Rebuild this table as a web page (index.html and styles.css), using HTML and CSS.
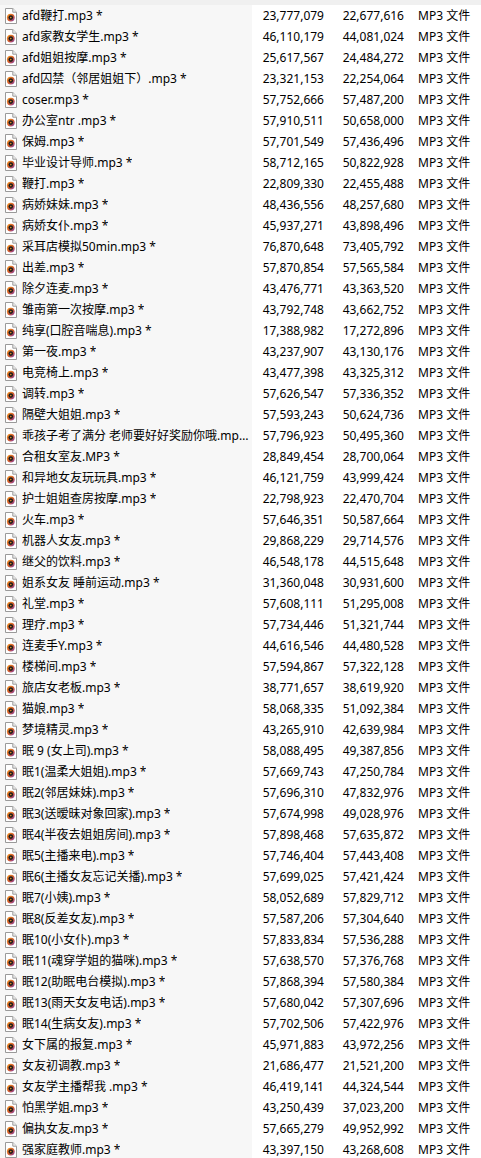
FILE: index.html
```html
<!DOCTYPE html>
<html lang="zh-CN">
<head>
<meta charset="utf-8">
<title>文件列表</title>
<link rel="stylesheet" href="styles.css">
</head>
<body>
<svg class="defs" width="0" height="0" aria-hidden="true">
  <defs>
    <linearGradient id="ring" x1="0" y1="0" x2="1" y2="1">
      <stop offset="0" stop-color="#f39a1e"/>
      <stop offset="0.55" stop-color="#d2582e"/>
      <stop offset="1" stop-color="#7b3bb8"/>
    </linearGradient>
    <symbol id="mp3" viewBox="0 0 12 16">
      <path d="M0.5 0.5 H7.8 L11.5 4.2 V15.5 H0.5 Z" fill="#fff" stroke="#9a9a9a"/>
      <path d="M7.8 0.5 V4.2 H11.5" fill="#f0f0f0" stroke="#9a9a9a"/>
      <circle cx="5.8" cy="9.6" r="3.9" fill="url(#ring)"/>
      <circle cx="5.8" cy="9.6" r="2.3" fill="#1c1c1c"/>
      <circle cx="5.8" cy="9.6" r="0.8" fill="#e8902c"/>
    </symbol>
  </defs>
</svg>
<div class="list">
  <div class="topbar"></div>
  <div class="row"><div class="name"><svg class="ico"><use href="#mp3"/></svg><span class="fn">afd鞭打.mp3 *</span></div><div class="num">23,777,079</div><div class="num">22,677,616</div><div class="type">MP3 文件</div></div>
  <div class="row"><div class="name"><svg class="ico"><use href="#mp3"/></svg><span class="fn">afd家教女学生.mp3 *</span></div><div class="num">46,110,179</div><div class="num">44,081,024</div><div class="type">MP3 文件</div></div>
  <div class="row"><div class="name"><svg class="ico"><use href="#mp3"/></svg><span class="fn">afd姐姐按摩.mp3 *</span></div><div class="num">25,617,567</div><div class="num">24,484,272</div><div class="type">MP3 文件</div></div>
  <div class="row"><div class="name"><svg class="ico"><use href="#mp3"/></svg><span class="fn">afd囚禁（邻居姐姐下）.mp3 *</span></div><div class="num">23,321,153</div><div class="num">22,254,064</div><div class="type">MP3 文件</div></div>
  <div class="row"><div class="name"><svg class="ico"><use href="#mp3"/></svg><span class="fn">coser.mp3 *</span></div><div class="num">57,752,666</div><div class="num">57,487,200</div><div class="type">MP3 文件</div></div>
  <div class="row"><div class="name"><svg class="ico"><use href="#mp3"/></svg><span class="fn">办公室ntr .mp3 *</span></div><div class="num">57,910,511</div><div class="num">50,658,000</div><div class="type">MP3 文件</div></div>
  <div class="row"><div class="name"><svg class="ico"><use href="#mp3"/></svg><span class="fn">保姆.mp3 *</span></div><div class="num">57,701,549</div><div class="num">57,436,496</div><div class="type">MP3 文件</div></div>
  <div class="row"><div class="name"><svg class="ico"><use href="#mp3"/></svg><span class="fn">毕业设计导师.mp3 *</span></div><div class="num">58,712,165</div><div class="num">50,822,928</div><div class="type">MP3 文件</div></div>
  <div class="row"><div class="name"><svg class="ico"><use href="#mp3"/></svg><span class="fn">鞭打.mp3 *</span></div><div class="num">22,809,330</div><div class="num">22,455,488</div><div class="type">MP3 文件</div></div>
  <div class="row"><div class="name"><svg class="ico"><use href="#mp3"/></svg><span class="fn">病娇妹妹.mp3 *</span></div><div class="num">48,436,556</div><div class="num">48,257,680</div><div class="type">MP3 文件</div></div>
  <div class="row"><div class="name"><svg class="ico"><use href="#mp3"/></svg><span class="fn">病娇女仆.mp3 *</span></div><div class="num">45,937,271</div><div class="num">43,898,496</div><div class="type">MP3 文件</div></div>
  <div class="row"><div class="name"><svg class="ico"><use href="#mp3"/></svg><span class="fn">采耳店模拟50min.mp3 *</span></div><div class="num">76,870,648</div><div class="num">73,405,792</div><div class="type">MP3 文件</div></div>
  <div class="row"><div class="name"><svg class="ico"><use href="#mp3"/></svg><span class="fn">出差.mp3 *</span></div><div class="num">57,870,854</div><div class="num">57,565,584</div><div class="type">MP3 文件</div></div>
  <div class="row"><div class="name"><svg class="ico"><use href="#mp3"/></svg><span class="fn">除夕连麦.mp3 *</span></div><div class="num">43,476,771</div><div class="num">43,363,520</div><div class="type">MP3 文件</div></div>
  <div class="row"><div class="name"><svg class="ico"><use href="#mp3"/></svg><span class="fn">雏南第一次按摩.mp3 *</span></div><div class="num">43,792,748</div><div class="num">43,662,752</div><div class="type">MP3 文件</div></div>
  <div class="row"><div class="name"><svg class="ico"><use href="#mp3"/></svg><span class="fn">纯享(口腔音喘息).mp3 *</span></div><div class="num">17,388,982</div><div class="num">17,272,896</div><div class="type">MP3 文件</div></div>
  <div class="row"><div class="name"><svg class="ico"><use href="#mp3"/></svg><span class="fn">第一夜.mp3 *</span></div><div class="num">43,237,907</div><div class="num">43,130,176</div><div class="type">MP3 文件</div></div>
  <div class="row"><div class="name"><svg class="ico"><use href="#mp3"/></svg><span class="fn">电竞椅上.mp3 *</span></div><div class="num">43,477,398</div><div class="num">43,325,312</div><div class="type">MP3 文件</div></div>
  <div class="row"><div class="name"><svg class="ico"><use href="#mp3"/></svg><span class="fn">调转.mp3 *</span></div><div class="num">57,626,547</div><div class="num">57,336,352</div><div class="type">MP3 文件</div></div>
  <div class="row"><div class="name"><svg class="ico"><use href="#mp3"/></svg><span class="fn">隔壁大姐姐.mp3 *</span></div><div class="num">57,593,243</div><div class="num">50,624,736</div><div class="type">MP3 文件</div></div>
  <div class="row"><div class="name"><svg class="ico"><use href="#mp3"/></svg><span class="fn">乖孩子考了满分 老师要好好奖励你哦.mp3 *</span></div><div class="num">57,796,923</div><div class="num">50,495,360</div><div class="type">MP3 文件</div></div>
  <div class="row"><div class="name"><svg class="ico"><use href="#mp3"/></svg><span class="fn">合租女室友.MP3 *</span></div><div class="num">28,849,454</div><div class="num">28,700,064</div><div class="type">MP3 文件</div></div>
  <div class="row"><div class="name"><svg class="ico"><use href="#mp3"/></svg><span class="fn">和异地女友玩玩具.mp3 *</span></div><div class="num">46,121,759</div><div class="num">43,999,424</div><div class="type">MP3 文件</div></div>
  <div class="row"><div class="name"><svg class="ico"><use href="#mp3"/></svg><span class="fn">护士姐姐查房按摩.mp3 *</span></div><div class="num">22,798,923</div><div class="num">22,470,704</div><div class="type">MP3 文件</div></div>
  <div class="row"><div class="name"><svg class="ico"><use href="#mp3"/></svg><span class="fn">火车.mp3 *</span></div><div class="num">57,646,351</div><div class="num">50,587,664</div><div class="type">MP3 文件</div></div>
  <div class="row"><div class="name"><svg class="ico"><use href="#mp3"/></svg><span class="fn">机器人女友.mp3 *</span></div><div class="num">29,868,229</div><div class="num">29,714,576</div><div class="type">MP3 文件</div></div>
  <div class="row"><div class="name"><svg class="ico"><use href="#mp3"/></svg><span class="fn">继父的饮料.mp3 *</span></div><div class="num">46,548,178</div><div class="num">44,515,648</div><div class="type">MP3 文件</div></div>
  <div class="row"><div class="name"><svg class="ico"><use href="#mp3"/></svg><span class="fn">姐系女友 睡前运动.mp3 *</span></div><div class="num">31,360,048</div><div class="num">30,931,600</div><div class="type">MP3 文件</div></div>
  <div class="row"><div class="name"><svg class="ico"><use href="#mp3"/></svg><span class="fn">礼堂.mp3 *</span></div><div class="num">57,608,111</div><div class="num">51,295,008</div><div class="type">MP3 文件</div></div>
  <div class="row"><div class="name"><svg class="ico"><use href="#mp3"/></svg><span class="fn">理疗.mp3 *</span></div><div class="num">57,734,446</div><div class="num">51,321,744</div><div class="type">MP3 文件</div></div>
  <div class="row"><div class="name"><svg class="ico"><use href="#mp3"/></svg><span class="fn">连麦手Y.mp3 *</span></div><div class="num">44,616,546</div><div class="num">44,480,528</div><div class="type">MP3 文件</div></div>
  <div class="row"><div class="name"><svg class="ico"><use href="#mp3"/></svg><span class="fn">楼梯间.mp3 *</span></div><div class="num">57,594,867</div><div class="num">57,322,128</div><div class="type">MP3 文件</div></div>
  <div class="row"><div class="name"><svg class="ico"><use href="#mp3"/></svg><span class="fn">旅店女老板.mp3 *</span></div><div class="num">38,771,657</div><div class="num">38,619,920</div><div class="type">MP3 文件</div></div>
  <div class="row"><div class="name"><svg class="ico"><use href="#mp3"/></svg><span class="fn">猫娘.mp3 *</span></div><div class="num">58,068,335</div><div class="num">51,092,384</div><div class="type">MP3 文件</div></div>
  <div class="row"><div class="name"><svg class="ico"><use href="#mp3"/></svg><span class="fn">梦境精灵.mp3 *</span></div><div class="num">43,265,910</div><div class="num">42,639,984</div><div class="type">MP3 文件</div></div>
  <div class="row"><div class="name"><svg class="ico"><use href="#mp3"/></svg><span class="fn">眠 9 (女上司).mp3 *</span></div><div class="num">58,088,495</div><div class="num">49,387,856</div><div class="type">MP3 文件</div></div>
  <div class="row"><div class="name"><svg class="ico"><use href="#mp3"/></svg><span class="fn">眠1(温柔大姐姐).mp3 *</span></div><div class="num">57,669,743</div><div class="num">47,250,784</div><div class="type">MP3 文件</div></div>
  <div class="row"><div class="name"><svg class="ico"><use href="#mp3"/></svg><span class="fn">眠2(邻居妹妹).mp3 *</span></div><div class="num">57,696,310</div><div class="num">47,832,976</div><div class="type">MP3 文件</div></div>
  <div class="row"><div class="name"><svg class="ico"><use href="#mp3"/></svg><span class="fn">眠3(送暧昧对象回家).mp3 *</span></div><div class="num">57,674,998</div><div class="num">49,028,976</div><div class="type">MP3 文件</div></div>
  <div class="row"><div class="name"><svg class="ico"><use href="#mp3"/></svg><span class="fn">眠4(半夜去姐姐房间).mp3 *</span></div><div class="num">57,898,468</div><div class="num">57,635,872</div><div class="type">MP3 文件</div></div>
  <div class="row"><div class="name"><svg class="ico"><use href="#mp3"/></svg><span class="fn">眠5(主播来电).mp3 *</span></div><div class="num">57,746,404</div><div class="num">57,443,408</div><div class="type">MP3 文件</div></div>
  <div class="row"><div class="name"><svg class="ico"><use href="#mp3"/></svg><span class="fn">眠6(主播女友忘记关播).mp3 *</span></div><div class="num">57,699,025</div><div class="num">57,421,424</div><div class="type">MP3 文件</div></div>
  <div class="row"><div class="name"><svg class="ico"><use href="#mp3"/></svg><span class="fn">眠7(小姨).mp3 *</span></div><div class="num">58,052,689</div><div class="num">57,829,712</div><div class="type">MP3 文件</div></div>
  <div class="row"><div class="name"><svg class="ico"><use href="#mp3"/></svg><span class="fn">眠8(反差女友).mp3 *</span></div><div class="num">57,587,206</div><div class="num">57,304,640</div><div class="type">MP3 文件</div></div>
  <div class="row"><div class="name"><svg class="ico"><use href="#mp3"/></svg><span class="fn">眠10(小女仆).mp3 *</span></div><div class="num">57,833,834</div><div class="num">57,536,288</div><div class="type">MP3 文件</div></div>
  <div class="row"><div class="name"><svg class="ico"><use href="#mp3"/></svg><span class="fn">眠11(魂穿学姐的猫咪).mp3 *</span></div><div class="num">57,638,570</div><div class="num">57,376,768</div><div class="type">MP3 文件</div></div>
  <div class="row"><div class="name"><svg class="ico"><use href="#mp3"/></svg><span class="fn">眠12(助眠电台模拟).mp3 *</span></div><div class="num">57,868,394</div><div class="num">57,580,384</div><div class="type">MP3 文件</div></div>
  <div class="row"><div class="name"><svg class="ico"><use href="#mp3"/></svg><span class="fn">眠13(雨天女友电话).mp3 *</span></div><div class="num">57,680,042</div><div class="num">57,307,696</div><div class="type">MP3 文件</div></div>
  <div class="row"><div class="name"><svg class="ico"><use href="#mp3"/></svg><span class="fn">眠14(生病女友).mp3 *</span></div><div class="num">57,702,506</div><div class="num">57,422,976</div><div class="type">MP3 文件</div></div>
  <div class="row"><div class="name"><svg class="ico"><use href="#mp3"/></svg><span class="fn">女下属的报复.mp3 *</span></div><div class="num">45,971,883</div><div class="num">43,972,256</div><div class="type">MP3 文件</div></div>
  <div class="row"><div class="name"><svg class="ico"><use href="#mp3"/></svg><span class="fn">女友初调教.mp3 *</span></div><div class="num">21,686,477</div><div class="num">21,521,200</div><div class="type">MP3 文件</div></div>
  <div class="row"><div class="name"><svg class="ico"><use href="#mp3"/></svg><span class="fn">女友学主播帮我 .mp3 *</span></div><div class="num">46,419,141</div><div class="num">44,324,544</div><div class="type">MP3 文件</div></div>
  <div class="row"><div class="name"><svg class="ico"><use href="#mp3"/></svg><span class="fn">怕黑学姐.mp3 *</span></div><div class="num">43,250,439</div><div class="num">37,023,200</div><div class="type">MP3 文件</div></div>
  <div class="row"><div class="name"><svg class="ico"><use href="#mp3"/></svg><span class="fn">偏执女友.mp3 *</span></div><div class="num">57,665,279</div><div class="num">49,952,992</div><div class="type">MP3 文件</div></div>
  <div class="row"><div class="name"><svg class="ico"><use href="#mp3"/></svg><span class="fn">强家庭教师.mp3 *</span></div><div class="num">43,397,150</div><div class="num">43,268,608</div><div class="type">MP3 文件</div></div>
</div>
</body>
</html>
```

FILE: styles.css
```css
html, body {
  margin: 0;
  padding: 0;
  background: #ffffff;
}

body {
  width: 481px;
  height: 1158px;
  overflow: hidden;
  font-family: "Noto Sans", "Noto Sans CJK SC", sans-serif;
  font-size: 12px;
  color: #000000;
}

.defs {
  position: absolute;
  width: 0;
  height: 0;
}

.list {
  display: flex;
  flex-direction: column;
}

.topbar {
  height: 5px;
  background: #f0f0f0;
}

.row {
  display: grid;
  grid-template-columns: 252px 72px 80px 1fr;
  height: 21px;
  line-height: 21px;
}

.name {
  display: flex;
  align-items: center;
  gap: 5px;
  padding-left: 5px;
  padding-right: 3px;
  background: #f7f7f7;
  min-width: 0;
}

.ico {
  width: 12px;
  height: 16px;
  flex: none;
}

.fn {
  white-space: nowrap;
  overflow: hidden;
  text-overflow: ellipsis;
  min-width: 0;
}

.num {
  text-align: right;
  white-space: nowrap;
}

.type {
  padding-left: 14px;
  white-space: nowrap;
}
```
